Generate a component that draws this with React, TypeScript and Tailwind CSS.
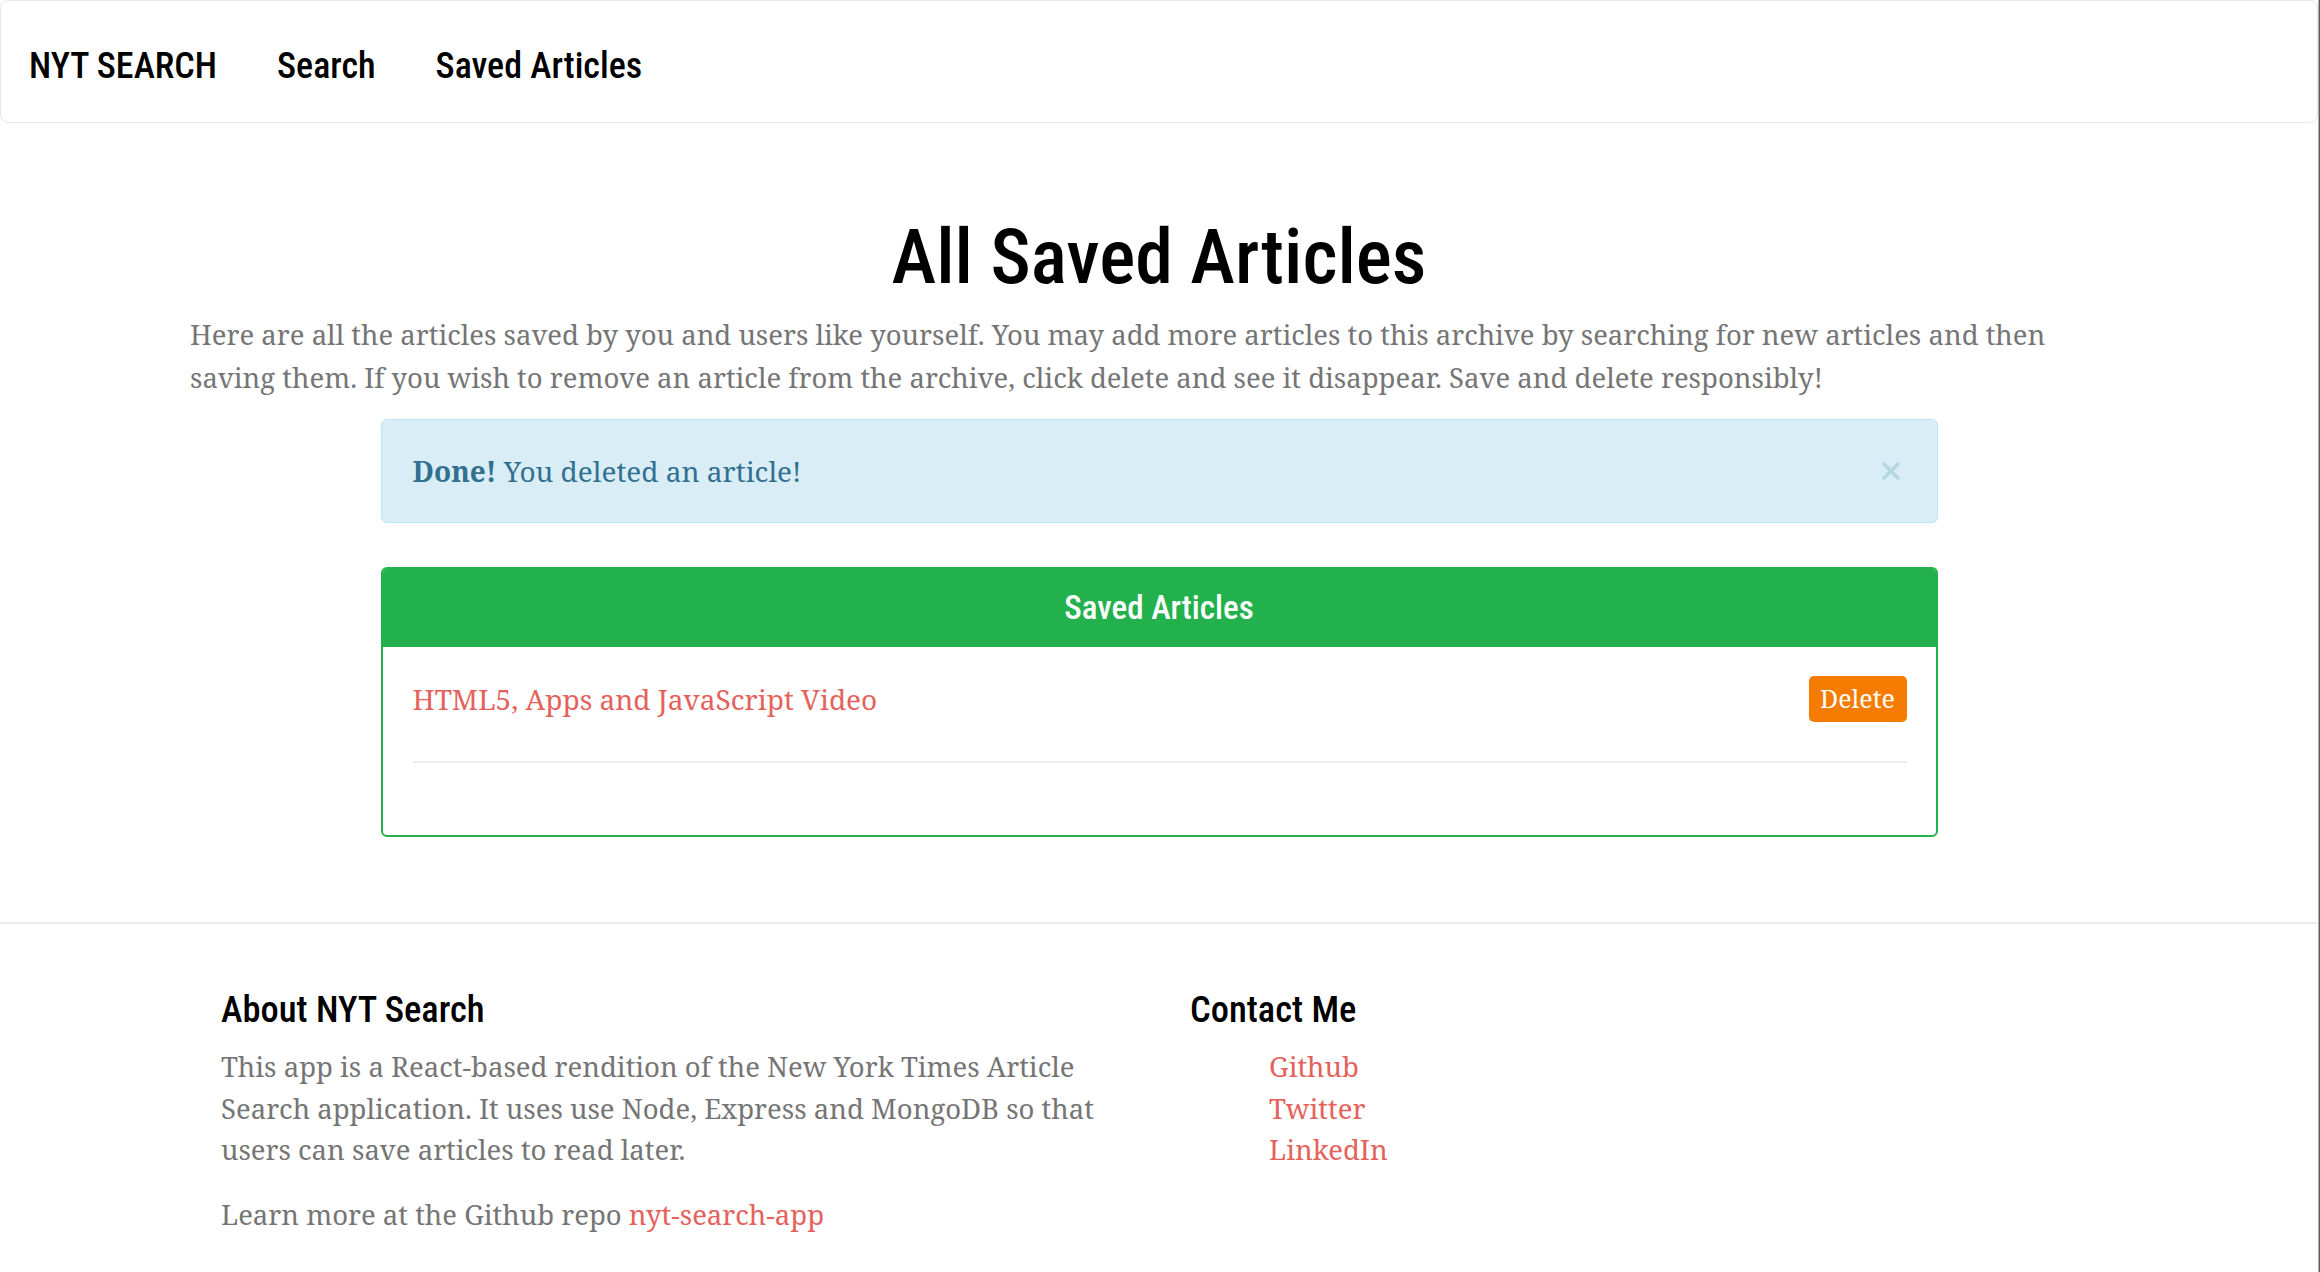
import { X } from 'lucide-react';

const cond = "font-['Roboto',sans-serif] font-stretch-condensed";
const serif = "font-['Noto_Serif','DejaVu_Serif',serif]";

const articles = [{ id: 'a1', title: 'HTML5, Apps and JavaScript Video' }];

const contacts = ['Github', 'Twitter', 'LinkedIn'];

export default function App() {
  return (
    <div className="min-h-screen bg-white flex">
      <div className="flex-1 min-w-0">
        <nav className={"h-[123px] border border-[#e7e7e7] rounded-[8px] flex items-center pl-[28px] pt-[8px] gap-[60px] text-[36px] font-medium text-black " + cond}>
          <a href="#">NYT SEARCH</a>
          <a href="#">Search</a>
          <a href="#">Saved Articles</a>
        </nav>

        <main className="w-[1938px] mx-auto">
          <h1 className={"mt-[90px] text-center text-[76px] leading-[88px] font-medium text-black " + cond}>All Saved Articles</h1>
          <p className={"mt-[12px] text-[27.5px] leading-[43px] text-[#757575] " + serif}>
            Here are all the articles saved by you and users like yourself. You may add more articles to this archive by searching for new articles and then
            <br />
            saving them. If you wish to remove an article from the archive, click delete and see it disappear. Save and delete responsibly!
          </p>

          <div className={"mt-[20px] w-[1557px] mx-auto h-[104px] border border-[#bce8f1] bg-[#d9edf7] rounded-[6px] flex items-center justify-between pl-[31px] pr-[32px] text-[28px] text-[#31708f] " + serif}>
            <span><strong>Done!</strong> You deleted an article!</span>
            <X className="text-[#b5d6e4]" size={28} strokeWidth={3} />
          </div>

          <section className="mt-[44px] w-[1557px] mx-auto border-2 border-[#22b14c] rounded-[6px] overflow-hidden">
            <div className={"h-[78px] bg-[#22b14c] flex items-center justify-center text-white text-[33px] font-medium " + cond}>Saved Articles</div>
            <div className="pl-[30px] pr-[29px] pb-[72px]">
              {articles.map(a => (
                <div key={a.id}>
                  <div className="pt-[29px] flex items-center justify-between">
                    <a href="#" className={"text-[28px] text-[#e5625c] " + serif}>{a.title}</a>
                    <button className={"h-[46px] w-[98px] rounded-[5px] bg-[#f57c00] text-white text-[25px] " + serif}>Delete</button>
                  </div>
                  <div className="mt-[39px] border-b-2 border-[#eeeeee]" />
                </div>
              ))}
            </div>
          </section>
        </main>

        <footer className="mt-[85px] border-t-2 border-[#ececec] pt-[64px] pb-[30px]">
          <div className="w-[1938px] mx-auto grid grid-cols-2">
            <div className="px-[31px]">
              <h3 className={"text-[36.5px] leading-[44px] font-medium text-black " + cond}>About NYT Search</h3>
              <p className={"mt-[14px] text-[27.5px] leading-[41.5px] text-[#757575] " + serif}>
                This app is a React-based rendition of the New York Times Article Search application. It uses use Node, Express and MongoDB so that users can save articles to read later.
              </p>
              <p className={"mt-[23px] text-[27.5px] leading-[41.5px] text-[#757575] " + serif}>
                Learn more at the Github repo <a href="#" className="text-[#e5625c]">nyt-search-app</a>
              </p>
            </div>
            <div className="px-[31px]">
              <h3 className={"text-[36.5px] leading-[44px] font-medium text-black " + cond}>Contact Me</h3>
              <ul className={"mt-[14px] pl-[79px] text-[27.5px] leading-[41.5px] " + serif}>
                {contacts.map(c => (
                  <li key={c}><a href="#" className="text-[#e5625c]">{c}</a></li>
                ))}
              </ul>
            </div>
          </div>
        </footer>
      </div>
      <div className="w-[2px] bg-[#55606a] border-l border-[#b0b0b0]" />
    </div>
  );
}
